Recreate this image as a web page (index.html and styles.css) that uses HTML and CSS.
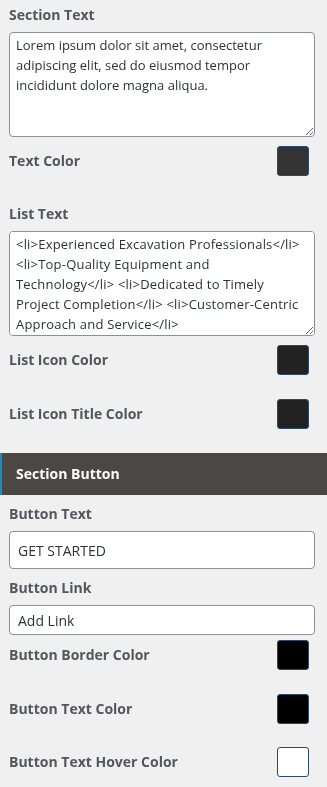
FILE: index.html
```html
<!DOCTYPE html>
<html>

<head>
    <meta charset="utf-8">
    <link rel="stylesheet" href="styles.css">
</head>

<body>

    <!-- Section text settings -->
    <div class="section">
        <div class="field">
            <label for="sectionText">Section Text</label>
            <textarea id="sectionText" class="text-area">Lorem ipsum dolor sit amet, consectetur adipiscing elit, sed do eiusmod tempor incididunt dolore magna aliqua.</textarea>
        </div>
        <div class="color-row first">
            <span class="color-label">Text Color</span>
            <button class="swatch" style="background-color: #333333;"></button>
        </div>

        <div class="field list-field">
            <label for="listText">List Text</label>
            <textarea id="listText" class="text-area list-area">&lt;li&gt;Experienced Excavation Professionals&lt;/li&gt; &lt;li&gt;Top-Quality Equipment and Technology&lt;/li&gt; &lt;li&gt;Dedicated to Timely Project Completion&lt;/li&gt; &lt;li&gt;Customer-Centric Approach and Service&lt;/li&gt;</textarea>
        </div>
        <div class="color-row first">
            <span class="color-label">List Icon Color</span>
            <button class="swatch" style="background-color: #222222;"></button>
        </div>
        <div class="color-row">
            <span class="color-label">List Icon Title Color</span>
            <button class="swatch" style="background-color: #222222;"></button>
        </div>
    </div>

    <!-- Section button settings -->
    <h3 class="section-title">Section Button</h3>

    <div class="section no-top">
        <div class="field small">
            <label for="buttonText">Button Text</label>
            <input id="buttonText" class="text-input tall" type="text" value="GET STARTED">
        </div>
        <div class="field small">
            <label for="buttonLink">Button Link</label>
            <input id="buttonLink" class="text-input" type="text" placeholder="Add Link">
        </div>
        <div class="color-row tight">
            <span class="color-label">Button Border Color</span>
            <button class="swatch" style="background-color: #000000;"></button>
        </div>
        <div class="color-row">
            <span class="color-label">Button Text Color</span>
            <button class="swatch" style="background-color: #000000;"></button>
        </div>
        <div class="color-row last">
            <span class="color-label">Button Text Hover Color</span>
            <button class="swatch" style="background-color: #ffffff;"></button>
        </div>
    </div>

</body>

</html>
```

FILE: styles.css
```css
/* Page */
body {
    margin: 0;
    background-color: #f0f0f0;
    font-family: "Open Sans", "Noto Sans", sans-serif;
    color: #50575e;
}

/* Blocks of controls */
.section {
    padding: 5px 12px 0 9px;
}

.section.no-top {
    padding-top: 0;
}

.field label {
    display: block;
    font-size: 14px;
    font-weight: bold;
    line-height: 20px;
}

.list-field {
    margin-top: 28px;
}

.field.small {
    margin-top: 9px;
}

/* Text areas */
.text-area {
    display: block;
    box-sizing: border-box;
    width: 100%;
    height: 105px;
    margin-top: 7px;
    padding: 2px 6px;
    font-family: inherit;
    font-size: 13px;
    line-height: 20px;
    color: #2c3338;
    background-color: #fff;
    border: 1px solid #8c8f94;
    border-radius: 4px;
}

.list-area {
    letter-spacing: 0.2px;
}

/* Text inputs */
.text-input {
    display: block;
    box-sizing: border-box;
    width: 100%;
    height: 30px;
    margin-top: 7px;
    padding: 0 8px;
    font-family: inherit;
    font-size: 14px;
    color: #2c3338;
    background-color: #fff;
    border: 1px solid #8c8f94;
    border-radius: 4px;
}

.text-input.tall {
    height: 38px;
}

.text-input::placeholder {
    color: #2c3338;
    opacity: 1;
}

/* Label + colour swatch rows */
.color-row {
    display: flex;
    align-items: center;
    justify-content: space-between;
    margin-top: 24px;
    padding-right: 6px;
}

.color-row.first {
    margin-top: 9px;
}

.color-row.tight {
    margin-top: 5px;
}

.color-row.last {
    margin-top: 23px;
}

.color-label {
    font-size: 14px;
    font-weight: bold;
    line-height: 20px;
}

.swatch {
    width: 32px;
    height: 30px;
    padding: 0;
    border: 1px solid #2a4a6c;
    border-radius: 3px;
}

/* Dark section heading */
.section-title {
    margin: 24px 0 0 0;
    height: 42px;
    padding-left: 14px;
    line-height: 42px;
    font-size: 14px;
    font-weight: bold;
    color: #fff;
    background-color: #4b4744;
    border-left: 2px solid #1e8cbe;
}
```
